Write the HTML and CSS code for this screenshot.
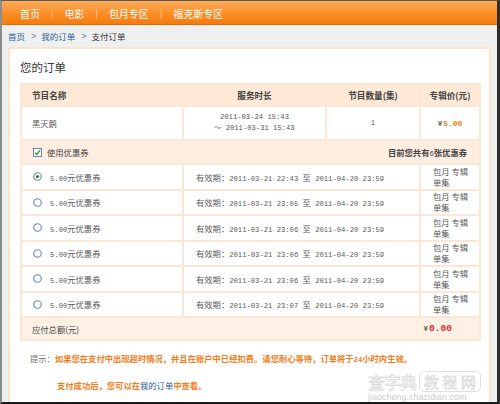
FILE: index.html
```html
<!DOCTYPE html>
<html lang="zh-CN">
<head>
<meta charset="utf-8">
<title>支付订单</title>
<link rel="stylesheet" href="styles.css">
</head>
<body>
<div class="screen">
  <nav class="topnav">
    <a>首页</a><span class="sep">|</span><a>电影</a><span class="sep">|</span><a>包月专区</a><span class="sep">|</span><a>福克斯专区</a>
  </nav>
  <div class="crumb">
    <a>首页</a><span class="arr">&gt;</span><a>我的订单</a><span class="arr">&gt;</span><span>支付订单</span>
  </div>
  <main class="panel">
    <h2 class="title">您的订单</h2>
    <div class="table">
      <div class="row thead grid4">
        <div class="cell first">节目名称</div>
        <div class="cell c">服务时长</div>
        <div class="cell c">节目数量(集)</div>
        <div class="cell c">专辑价(元)</div>
      </div>
      <div class="row item grid4">
        <div class="cell first">黑天鹅</div>
        <div class="cell c"><div class="dates num"><div>2011-03-24 15:43</div><div>～ 2011-03-31 15:43</div></div></div>
        <div class="cell c num">1</div>
        <div class="cell c"><span class="yen">¥</span><span class="price num">5.00</span></div>
      </div>
      <div class="row chead">
        <label class="use"><svg class="chk" width="10" height="10" viewBox="0 0 10 10"><rect x="0.5" y="0.5" width="9" height="9" fill="#fff" stroke="#5a7ca6"/><path d="M2.2 5.2 L4.2 7.2 L7.9 2.6" fill="none" stroke="#2e9a2e" stroke-width="1.5"/></svg>使用优惠券</label>
        <span class="count">目前您共有<span class="num">6</span>张优惠券</span>
      </div>
      <div class="row coupon grid3">
        <div class="cell cp"><svg class="radio" width="10" height="10" viewBox="0 0 10 10"><circle cx="5" cy="5" r="4.2" fill="#fff" stroke="#6d8cb4" stroke-width="1.3"/><circle cx="5" cy="5" r="1.8" fill="#3b6e3b"/></svg><span><span class="num">5.00</span>元优惠券</span></div>
        <div class="cell vp"><span>有效期：<span class="num">2011-03-21 22:43 </span>至<span class="num"> 2011-04-20 23:59</span></span></div>
        <div class="cell tp"><div>包月 专辑<br>单集</div></div>
      </div>
      <div class="row coupon grid3">
        <div class="cell cp"><svg class="radio" width="10" height="10" viewBox="0 0 10 10"><circle cx="5" cy="5" r="4.2" fill="#fff" stroke="#6d8cb4" stroke-width="1.3"/></svg><span><span class="num">5.00</span>元优惠券</span></div>
        <div class="cell vp"><span>有效期：<span class="num">2011-03-21 23:05 </span>至<span class="num"> 2011-04-20 23:59</span></span></div>
        <div class="cell tp"><div>包月 专辑<br>单集</div></div>
      </div>
      <div class="row coupon grid3">
        <div class="cell cp"><svg class="radio" width="10" height="10" viewBox="0 0 10 10"><circle cx="5" cy="5" r="4.2" fill="#fff" stroke="#6d8cb4" stroke-width="1.3"/></svg><span><span class="num">5.00</span>元优惠券</span></div>
        <div class="cell vp"><span>有效期：<span class="num">2011-03-21 23:06 </span>至<span class="num"> 2011-04-20 23:59</span></span></div>
        <div class="cell tp"><div>包月 专辑<br>单集</div></div>
      </div>
      <div class="row coupon grid3">
        <div class="cell cp"><svg class="radio" width="10" height="10" viewBox="0 0 10 10"><circle cx="5" cy="5" r="4.2" fill="#fff" stroke="#6d8cb4" stroke-width="1.3"/></svg><span><span class="num">5.00</span>元优惠券</span></div>
        <div class="cell vp"><span>有效期：<span class="num">2011-03-21 23:06 </span>至<span class="num"> 2011-04-20 23:59</span></span></div>
        <div class="cell tp"><div>包月 专辑<br>单集</div></div>
      </div>
      <div class="row coupon grid3">
        <div class="cell cp"><svg class="radio" width="10" height="10" viewBox="0 0 10 10"><circle cx="5" cy="5" r="4.2" fill="#fff" stroke="#6d8cb4" stroke-width="1.3"/></svg><span><span class="num">5.00</span>元优惠券</span></div>
        <div class="cell vp"><span>有效期：<span class="num">2011-03-21 23:06 </span>至<span class="num"> 2011-04-20 23:59</span></span></div>
        <div class="cell tp"><div>包月 专辑<br>单集</div></div>
      </div>
      <div class="row coupon grid3">
        <div class="cell cp"><svg class="radio" width="10" height="10" viewBox="0 0 10 10"><circle cx="5" cy="5" r="4.2" fill="#fff" stroke="#6d8cb4" stroke-width="1.3"/></svg><span><span class="num">5.00</span>元优惠券</span></div>
        <div class="cell vp"><span>有效期：<span class="num">2011-03-21 23:07 </span>至<span class="num"> 2011-04-20 23:59</span></span></div>
        <div class="cell tp"><div>包月 专辑<br>单集</div></div>
      </div>
      <div class="row total">
        <span class="tlabel">应付总额(元)</span>
        <span class="tprice"><span class="yen">¥</span><span class="red num">0.00</span></span>
      </div>
    </div>
    <div class="tip">
      <p class="tline">提示：<span class="warn">如果您在支付中出现超时情况，并且在账户中已经扣费。请您耐心等待，订单将于<span class="num">24</span>小时内生效。</span></p>
      <p class="tline indent"><span class="warn">支付成功后，您可以在<a class="blue">我的订单</a>中查看。</span></p>
    </div>
  </main>
  <div class="wm">
    <div class="wm-top"><span class="wm-big">查字典</span><span class="wm-box">教 程 网</span></div>
    <div class="wm-url">jiaocheng.chazidian.com</div>
  </div>
</div>
</body>
</html>
```

FILE: styles.css
```css
* { box-sizing: border-box; }
body {
  margin: 0;
  font-family: "Noto Sans CJK SC", "Noto Sans", sans-serif;
  font-size: 8.3px;
  color: #5a5a5a;
}
.screen {
  width: 500px;
  height: 404px;
  border-top: 1px solid #5a5a5a;
  border-left: 2px solid #8d8d8d;
  border-right: 3px solid #2e2e2e;
  border-bottom: 2px solid #1b1b1b;
  background: #eef0ef;
  display: flex;
  flex-direction: column;
  position: relative;
  overflow: hidden;
}
.topnav {
  height: 24px;
  flex: none;
  display: flex;
  align-items: center;
  padding: 1px 0 0 18px;
  background: linear-gradient(#ffac5a, #fb8e28 55%, #f67b0c);
  border-bottom: 1px solid #e36c05;
  font-size: 10px;
  color: #fff;
}
.sep { margin: 0 11px; color: #fdd3ae; font-size: 9px; }
.crumb {
  height: 22px;
  flex: none;
  display: flex;
  align-items: center;
  padding-left: 6px;
  font-size: 8.5px;
  color: #333;
}
.crumb a { color: #2c5c98; }
.crumb .arr { margin: 0 5px 0 6px; color: #5f7fa8; font-family: "Liberation Sans", sans-serif; font-size: 9px; }
.panel {
  flex: 1;
  margin: 0 6px;
  background: #fff;
  border: 2px solid #fde3cc;
  border-bottom: 0;
  padding: 10px 8px 0 10px;
}
.title {
  margin: 0 0 8px;
  font-size: 11.5px;
  font-weight: normal;
  line-height: 16px;
  color: #333;
}
.table { border: 2px solid #fde6d3; border-bottom: 0; }
.grid4 { display: grid; grid-template-columns: 162px 143px 94px 58px; }
.grid3 { display: grid; grid-template-columns: 162px 237px 58px; }
.row { border-bottom: 2px solid #fde6d3; }
.cell { display: flex; align-items: center; border-right: 2px solid #fde6d3; }
.cell:last-child { border-right: 0; }
.c { justify-content: center; text-align: center; }
.first { padding-left: 10px; }
.num { font-family: "Liberation Mono", monospace; font-size: 7.2px; }
.thead { height: 22px; background: #fde9d6; font-weight: bold; color: #444; font-size: 8.6px; }
.item { height: 34px; }
.dates { line-height: 11px; color: #555; }
.yen { font-family: "Liberation Sans", sans-serif; font-size: 8px; color: #666; font-weight: bold; margin-right: 1px; }
.price { color: #f47a14; font-weight: bold; font-size: 8px; }
.chead {
  height: 24px;
  background: #fdeee1;
  display: flex;
  align-items: center;
  justify-content: space-between;
  padding: 0 12px 0 11px;
  color: #444;
}
.use { display: flex; align-items: center; gap: 5px; }
.chk { display: block; width: 9px; height: 9px; }
.count { font-weight: bold; color: #444; }
.count .num { font-weight: normal; }
.coupon { height: 25.5px; }
.cp { padding-left: 11px; gap: 8px; }
.radio { display: block; width: 9px; height: 9px; }
.vp { padding-left: 12px; white-space: pre; }
.tp { padding-left: 12px; line-height: 11px; white-space: nowrap; }
.total {
  height: 23px;
  background: #fdf1e6;
  display: flex;
  align-items: center;
  justify-content: space-between;
  padding: 0 27px 0 10px;
  color: #444;
}
.tprice { display: flex; align-items: baseline; }
.red { color: #e3262a; font-weight: bold; font-size: 9.6px; }
.tip { padding: 5px 0 0 10px; }
.tline { margin: 0; line-height: 25px; color: #777; white-space: nowrap; }
.indent { padding-left: 27px; }
.warn { color: #f27d1c; font-weight: bold; }
.blue { color: #2c5c98; font-weight: normal; }
.wm { position: absolute; left: 350px; top: 370px; width: 140px; }
.wm-top { display: flex; align-items: center; gap: 3px; }
.wm-big {
  font-size: 17px;
  line-height: 21px;
  color: #fafafa;
  -webkit-text-stroke: 0.5px #cfcfcf;
  letter-spacing: -1px;
  margin-left: 16px;
}
.wm-box {
  border: 1px solid #e0e0e0;
  border-radius: 5px;
  padding: 0 4px;
  font-size: 15px;
  line-height: 19px;
  color: #fafafa;
  -webkit-text-stroke: 0.5px #cfcfcf;
}
.wm-url {
  margin: 0 0 0 16px;
  font-family: "Liberation Sans", sans-serif;
  font-size: 9px;
  line-height: 10px;
  color: #cdcdcd;
}
```
